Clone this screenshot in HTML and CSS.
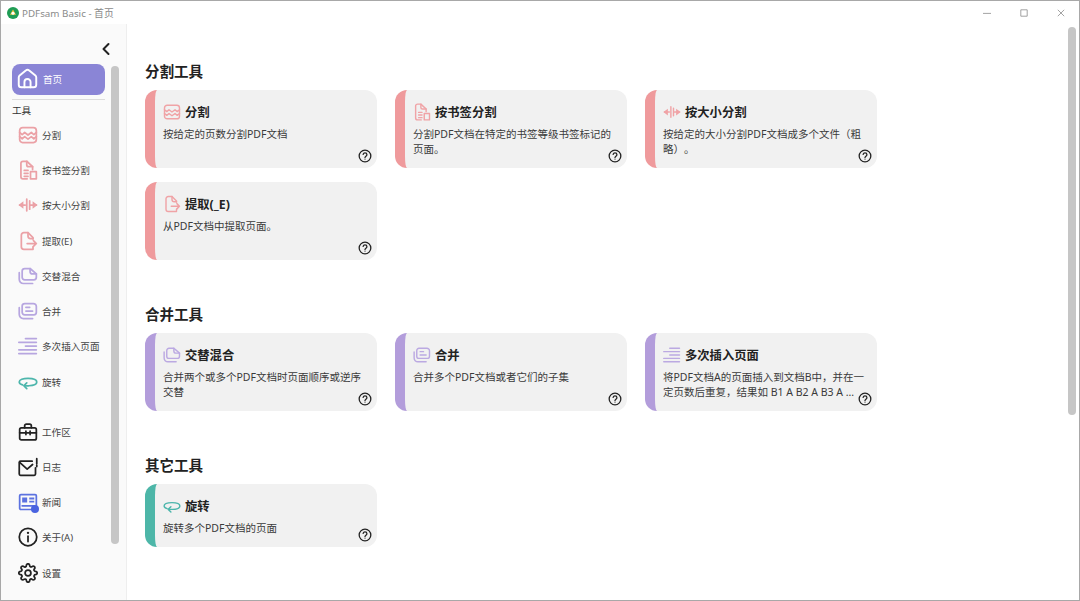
FILE: index.html
```html
<!DOCTYPE html>
<html lang="zh-CN">
<head>
<meta charset="utf-8">
<title>PDFsam Basic - 首页</title>
<link rel="stylesheet" href="styles.css">
</head>
<body>
<svg class="defs" width="0" height="0" aria-hidden="true">
  <defs>
    <symbol id="i-split" viewBox="0 0 24 24"><rect x="2" y="3" width="20" height="18" rx="3.500"/><path d="M2 9l3 2.500 3-2.500 4 3 4-3 3 2.500 3-2.500M2 14l3 2.500 3-2.500 4 3 4-3 3 2.500 3-2.500"/></symbol>
    <symbol id="i-bookmark" viewBox="0 0 24 24"><path d="M11 22.500H6a2.500 2.500 0 0 1-2.500-2.500V4A2.500 2.500 0 0 1 6 1.500h4.500l7 6.500v3.500"/><path d="M10.500 1.500v4.500a2 2 0 0 0 2 2h5"/><path d="M7.500 12.500h4.500M7.500 16h4.500M7.500 19.500h4.500"/><path d="M15 14h7v8.500h-7z"/></symbol>
    <symbol id="i-size" viewBox="0 0 24 24"><path d="M2 12h6.500M15.500 12H22M10.500 5v14M14 7v10"/><path class="fill" d="M0.500 12l6-4.500v9zM23.500 12l-6-4.500v9z"/></symbol>
    <symbol id="i-extract" viewBox="0 0 24 24"><path d="M18 9.500V8l-6-6H7A3 3 0 0 0 4 5v14a3 3 0 0 0 3 3h11v-3"/><path d="M12 2v4a3 3 0 0 0 3 3h3M11 15h11M18.500 11.500L22 15l-3.500 3.500"/></symbol>
    <symbol id="i-mix" viewBox="0 0 24 24"><path d="M8 3h6.500L22 9.500v4a3 3 0 0 1-3 3H8a3 3 0 0 1-3-3V6a3 3 0 0 1 3-3z"/><path d="M14.500 3v3.500a3 3 0 0 0 3 3H22"/><path d="M1.500 8v8a5 5 0 0 0 5 5h11"/></symbol>
    <symbol id="i-merge" viewBox="0 0 24 24"><path d="M8 3h10.500A3.500 3.500 0 0 1 22 6.500v7a3 3 0 0 1-3 3H8a3 3 0 0 1-3-3V6a3 3 0 0 1 3-3z"/><path d="M9.500 7.500h4.500M9.500 12h8"/><path d="M1.500 8v8a5 5 0 0 0 5 5h11"/></symbol>
    <symbol id="i-insert" viewBox="0 0 24 24"><path d="M9 3h13M1 7.500h21M9 12h13M1 16.500h21M1 21h21"/></symbol>
    <symbol id="i-rotate" viewBox="0 0 24 24"><path d="M5.500 15.500C3 14.700 1.500 13.500 1.500 12c0-2.800 4.700-4.500 10.500-4.500S22.500 9.200 22.500 12c0 2.600-3.800 4.300-9.500 4.500H8"/><path d="M10.500 13L7 16.500l3.500 3.500"/></symbol>
    <symbol id="i-case" viewBox="0 0 24 24"><rect x="2" y="7" width="20" height="14.500" rx="2"/><path d="M8 7V4.500A2 2 0 0 1 10 2.500h4a2 2 0 0 1 2 2V7M2 13h20M9.500 11v4M14.500 11v4"/></symbol>
    <symbol id="i-mail" viewBox="0 0 24 24"><path d="M17 5H3a1.500 1.500 0 0 0-1.500 1.500v14A1.500 1.500 0 0 0 3 22h16.500a1.500 1.500 0 0 0 1.500-1.500V13"/><path d="M2 6.500l9 8 6.500-5.500M22.500 2v6M22.500 10v1.500"/></symbol>
    <symbol id="i-news" viewBox="0 0 24 24"><rect x="2" y="3" width="20" height="18" rx="1.500"/><path class="fill" d="M5 6.500h6v6H5zM13.500 6.500h6v2.500h-6zM13.500 10.500h6v2h-6z"/><path d="M5 16.500h14.500"/></symbol>
    <symbol id="i-info" viewBox="0 0 24 24"><circle cx="12" cy="12" r="10.500"/><path d="M12 11v6.500"/><path class="fill" d="M10.600 7a1.400 1.400 0 1 0 2.800 0 1.400 1.400 0 1 0-2.800 0z"/></symbol>
    <symbol id="i-gear" viewBox="0 0 24 24"><circle cx="12" cy="12" r="3.500"/><path d="M19.400 15a1.650 1.650 0 0 0 .33 1.820l.06.06a2 2 0 0 1 0 2.830 2 2 0 0 1-2.830 0l-.06-.06a1.650 1.650 0 0 0-1.820-.33 1.650 1.650 0 0 0-1 1.510V21a2 2 0 0 1-2 2 2 2 0 0 1-2-2v-.09A1.650 1.650 0 0 0 9 19.400a1.650 1.650 0 0 0-1.820.33l-.06.06a2 2 0 0 1-2.830 0 2 2 0 0 1 0-2.830l.06-.06a1.650 1.650 0 0 0 .33-1.820 1.650 1.650 0 0 0-1.510-1H3a2 2 0 0 1-2-2 2 2 0 0 1 2-2h.09A1.650 1.650 0 0 0 4.600 9a1.650 1.650 0 0 0-.33-1.820l-.06-.06a2 2 0 0 1 0-2.830 2 2 0 0 1 2.830 0l.06.06a1.650 1.650 0 0 0 1.820.33H9a1.650 1.650 0 0 0 1-1.510V3a2 2 0 0 1 2-2 2 2 0 0 1 2 2v.09a1.650 1.650 0 0 0 1 1.510 1.650 1.650 0 0 0 1.820-.33l.06-.06a2 2 0 0 1 2.830 0 2 2 0 0 1 0 2.830l-.06.06a1.650 1.650 0 0 0-.33 1.820V9a1.650 1.650 0 0 0 1.510 1H21a2 2 0 0 1 2 2 2 2 0 0 1-2 2h-.09a1.650 1.650 0 0 0-1.510 1z"/></symbol>
    <symbol id="i-home" viewBox="0 0 24 24"><path d="M10 2.800L3 8.600A3 3 0 0 0 2 10.900V19a3 3 0 0 0 3 3h14a3 3 0 0 0 3-3v-8.100a3 3 0 0 0-1-2.300l-7-5.800a3 3 0 0 0-4 0z"/><path d="M8.500 22v-6a3.500 3.500 0 0 1 7 0v6"/></symbol>
    <symbol id="i-help" viewBox="0 0 24 24"><circle cx="12" cy="12" r="10"/><path d="M8.800 9.300A3.300 3.300 0 0 1 12 6.800c1.900 0 3.300 1.200 3.300 2.900 0 2.500-3.300 2.600-3.300 4.800"/><path class="fill" d="M10.900 17.300a1.100 1.100 0 1 0 2.200 0 1.100 1.100 0 1 0-2.200 0z"/></symbol>
  </defs>
</svg>

<div class="window">
  <header class="titlebar">
    <svg class="logo" viewBox="0 0 24 24" aria-hidden="true"><circle cx="12" cy="12" r="12" fill="#1f9d55"/><path d="M12 5l6 10.500H6z" fill="#f4c542"/><circle cx="12" cy="12.500" r="3" fill="#fff"/></svg>
    <span class="app-title">PDFsam Basic - 首页</span>
    <div class="controls">
      <svg class="ctl" viewBox="0 0 10 10" aria-hidden="true"><path d="M0 5.500h10"/></svg>
      <svg class="ctl" viewBox="0 0 10 10" aria-hidden="true"><path d="M1 1h8v8H1z"/></svg>
      <svg class="ctl" viewBox="0 0 10 10" aria-hidden="true"><path d="M1 1l8 8M9 1L1 9"/></svg>
    </div>
  </header>

  <div class="body">
    <aside class="sidebar">
      <div class="collapse">
        <svg class="chev" viewBox="0 0 10 14" aria-hidden="true"><path d="M7.500 2L2.500 7l5 5"/></svg>
      </div>
      <a class="home"><svg class="ic home-ic"><use href="#i-home"/></svg><span>首页</span></a>
      <div class="rule"></div>
      <div class="group-label">工具</div>
      <nav class="nav">
        <a class="item pink"><svg class="ic"><use href="#i-split"/></svg><span>分割</span></a>
        <a class="item pink"><svg class="ic"><use href="#i-bookmark"/></svg><span>按书签分割</span></a>
        <a class="item pink"><svg class="ic"><use href="#i-size"/></svg><span>按大小分割</span></a>
        <a class="item pink"><svg class="ic"><use href="#i-extract"/></svg><span>提取(E)</span></a>
        <a class="item purple"><svg class="ic"><use href="#i-mix"/></svg><span>交替混合</span></a>
        <a class="item purple"><svg class="ic"><use href="#i-merge"/></svg><span>合并</span></a>
        <a class="item purple"><svg class="ic"><use href="#i-insert"/></svg><span>多次插入页面</span></a>
        <a class="item teal"><svg class="ic"><use href="#i-rotate"/></svg><span>旋转</span></a>
      </nav>
      <nav class="nav nav-bottom">
        <a class="item dark"><svg class="ic"><use href="#i-case"/></svg><span>工作区</span></a>
        <a class="item dark"><svg class="ic"><use href="#i-mail"/></svg><span>日志</span></a>
        <a class="item blue"><span class="ic-wrap"><svg class="ic"><use href="#i-news"/></svg><i class="dot"></i></span><span>新闻</span></a>
        <a class="item dark"><svg class="ic"><use href="#i-info"/></svg><span>关于(A)</span></a>
        <a class="item dark"><svg class="ic"><use href="#i-gear"/></svg><span>设置</span></a>
      </nav>
      <div class="thumb thumb-side"></div>
    </aside>

    <main class="main">
      <section class="section">
        <h2>分割工具</h2>
        <div class="cards">
          <article class="card c-pink">
            <h3><svg class="ic"><use href="#i-split"/></svg>分割</h3>
            <p>按给定的页数分割PDF文档</p>
            <svg class="help"><use href="#i-help"/></svg>
          </article>
          <article class="card c-pink">
            <h3><svg class="ic"><use href="#i-bookmark"/></svg>按书签分割</h3>
            <p>分割PDF文档在特定的书签等级书签标记的页面。</p>
            <svg class="help"><use href="#i-help"/></svg>
          </article>
          <article class="card c-pink">
            <h3><svg class="ic"><use href="#i-size"/></svg>按大小分割</h3>
            <p>按给定的大小分割PDF文档成多个文件（粗略）。</p>
            <svg class="help"><use href="#i-help"/></svg>
          </article>
          <article class="card c-pink">
            <h3><svg class="ic"><use href="#i-extract"/></svg>提取(_E)</h3>
            <p>从PDF文档中提取页面。</p>
            <svg class="help"><use href="#i-help"/></svg>
          </article>
        </div>
      </section>

      <section class="section">
        <h2>合并工具</h2>
        <div class="cards">
          <article class="card c-purple">
            <h3><svg class="ic"><use href="#i-mix"/></svg>交替混合</h3>
            <p>合并两个或多个PDF文档时页面顺序或逆序交替</p>
            <svg class="help"><use href="#i-help"/></svg>
          </article>
          <article class="card c-purple">
            <h3><svg class="ic"><use href="#i-merge"/></svg>合并</h3>
            <p>合并多个PDF文档或者它们的子集</p>
            <svg class="help"><use href="#i-help"/></svg>
          </article>
          <article class="card c-purple">
            <h3><svg class="ic"><use href="#i-insert"/></svg>多次插入页面</h3>
            <p>将PDF文档A的页面插入到文档B中，并在一定页数后重复，结果如 B1 A B2 A B3 A ...</p>
            <svg class="help"><use href="#i-help"/></svg>
          </article>
        </div>
      </section>

      <section class="section">
        <h2>其它工具</h2>
        <div class="cards">
          <article class="card card-short c-teal">
            <h3><svg class="ic"><use href="#i-rotate"/></svg>旋转</h3>
            <p>旋转多个PDF文档的页面</p>
            <svg class="help"><use href="#i-help"/></svg>
          </article>
        </div>
      </section>

      <div class="thumb thumb-main"></div>
    </main>
  </div>
</div>
</body>
</html>
```

FILE: styles.css
```css
* { box-sizing: border-box; }
html, body { margin: 0; padding: 0; height: 100%; overflow: hidden; background: #fff; }
body { font-family: "Noto Sans", "Noto Sans CJK SC", sans-serif; color: #333; text-spacing-trim: space-all; }
.defs { position: absolute; }
symbol { fill: none; }

.window { width: 1080px; height: 601px; display: flex; flex-direction: column; border: 1px solid #a8a8a8; overflow: hidden; background: #fff; }

.titlebar { height: 23px; flex: none; display: flex; align-items: center; padding-left: 6px; }
.logo { width: 12px; height: 12px; margin-right: 3px; }
.app-title { font-size: 9.800px; color: #8a8a8a; }
.controls { margin-left: auto; display: flex; gap: 29px; padding-right: 14px; }
.ctl { width: 8px; height: 8px; fill: none; stroke: #8c8c8c; stroke-width: 1; }

.body { flex: 1; display: flex; min-height: 0; }

.ic { width: 20px; height: 20px; flex: none; fill: none; stroke: currentColor; stroke-width: 2.100; stroke-linecap: round; stroke-linejoin: round; }
.fill { fill: currentColor; stroke: none; }

.sidebar { position: relative; width: 126px; flex: none; background: #fafafa; border-right: 1px solid #eeeeee; padding-top: 16px; display: flex; flex-direction: column; overflow: hidden; }
.collapse { height: 18px; display: flex; justify-content: flex-end; align-items: center; padding-right: 15px; }
.chev { width: 10px; height: 14px; fill: none; stroke: #222; stroke-width: 2; stroke-linecap: round; stroke-linejoin: round; }
.home { margin: 6px 0 0 11px; width: 93px; height: 31px; border-radius: 8px; background: #8a85d6; color: #fff; display: flex; align-items: center; gap: 5px; padding: 0 0 2px 5px; font-size: 9.600px; }
.home-ic { width: 21px; height: 21px; stroke-width: 2.200; }
.rule { margin: 4px 0 0 11px; width: 93px; height: 1px; background: #dcdcdc; }
.group-label { margin: 5px 0 0 11px; height: 12px; line-height: 12px; font-size: 9.600px; color: #333; }

.nav { display: grid; grid-auto-rows: 35.300px; }
.nav-bottom { margin-top: 14.500px; }
.item { display: flex; align-items: center; gap: 4px; padding-left: 17px; font-size: 9.600px; }
.item span:last-child { color: #444; }
.pink { color: #eba1a6; }
.purple { color: #b7a6e0; }
.teal { color: #4db6ac; }
.dark { color: #222; }
.blue { color: #5c72e0; }
.ic-wrap { position: relative; display: flex; width: 20px; height: 20px; flex: none; }
.dot { position: absolute; right: -1px; bottom: -1px; width: 8px; height: 8px; border-radius: 50%; background: #4a63e0; }

.thumb { position: absolute; width: 8px; border-radius: 4px; background: #c6c6c6; }
.thumb-side { left: 110px; top: 42px; height: 478px; }
.thumb-main { left: 941px; top: 3px; height: 388px; }

.main { position: relative; flex: 1; min-width: 0; padding: 37px 0 0 18px; overflow: hidden; }
.section + .section { margin-top: 44px; }
h2 { margin: 0 0 9px; height: 20px; line-height: 20px; font-size: 14.500px; font-weight: 700; color: #222; }
.cards { display: grid; grid-template-columns: repeat(3, 232px); column-gap: 18px; row-gap: 14px; }

.card { position: relative; height: 78px; border-radius: 12px; background: #f1f1f1; border-left: 10px solid; padding: 13px 10px 0 8px; }
.card-short { height: 63px; }
.c-pink { border-left-color: #ef9a9c; color: #f0a3a6; }
.c-purple { border-left-color: #b39ddb; color: #bba9e2; }
.c-teal { border-left-color: #4db6a8; color: #4db6ac; }
h3 { margin: 0; height: 18px; display: flex; align-items: center; gap: 4px; font-size: 12.300px; font-weight: 700; color: #222; }
h3 .ic { width: 18px; height: 18px; stroke-width: 1.900; }
.c-pink h3 .ic { color: #f0a3a6; }
.c-purple h3 .ic { color: #bba9e2; }
.c-teal h3 .ic { color: #4db6ac; }
.card p { margin: 6px 0 0; font-size: 10.500px; line-height: 15px; color: #3a3a3a; }
.help { position: absolute; right: 5px; bottom: 5px; width: 14px; height: 14px; fill: none; stroke: #222; stroke-width: 2.200; stroke-linecap: round; color: #222; }
```
